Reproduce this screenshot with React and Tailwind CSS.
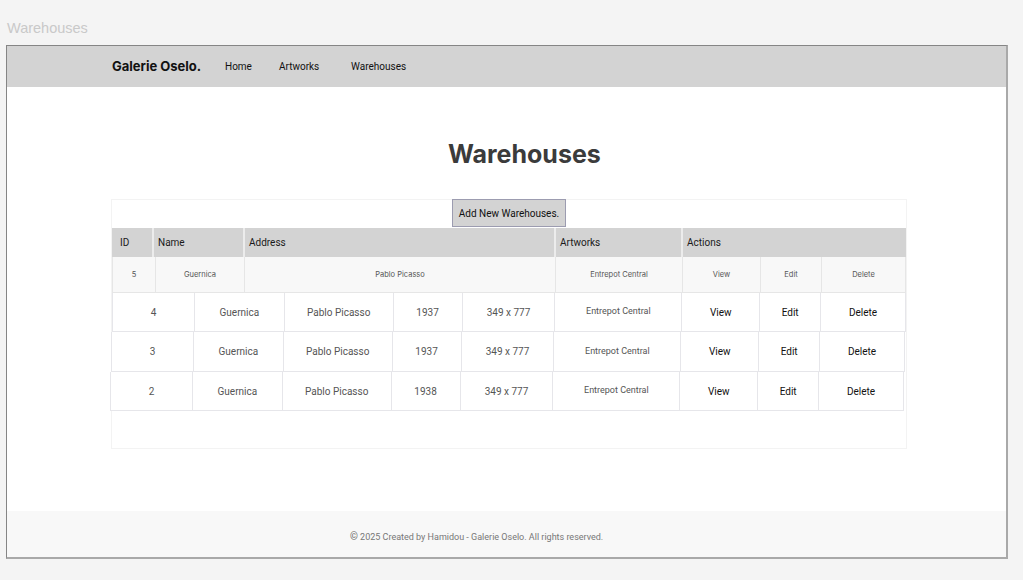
const NAV_LINKS = [
  { label: 'Home', w: 'w-[54px]' },
  { label: 'Artworks', w: 'w-[72px]' },
  { label: 'Warehouses', w: 'w-[80px]' },
]

const HEAD = [
  { label: 'ID', w: 'w-[40px]' },
  { label: 'Name', w: 'w-[91px]' },
  { label: 'Address', w: 'w-[311px]' },
  { label: 'Artworks', w: 'w-[127px]' },
  { label: 'Actions', w: 'flex-1' },
]

const FIRST_ROW = [
  { text: '5', w: 'w-[42px]' },
  { text: 'Guernica', w: 'w-[89px]' },
  { text: 'Pablo Picasso', w: 'w-[311px]' },
  { text: 'Entrepot Central', w: 'w-[127px]' },
  { text: 'View', w: 'w-[78px]' },
  { text: 'Edit', w: 'w-[61px]' },
  { text: 'Delete', w: 'flex-1' },
]

// rows are a little off from each other, like in the mockup
const ROWS = [
  { id: 4, year: '1937', shift: 'ml-0', h: 'h-[39px]' },
  { id: 3, year: '1937', shift: '-ml-px', h: 'h-[40px]' },
  { id: 2, year: '1938', shift: '-ml-[2px]', h: 'h-[39px]' },
]

const CELL_W = ['w-[81px]', 'w-[90px]', 'w-[109px]', 'w-[69px]', 'w-[93px]', 'w-[127px]', 'w-[78px]', 'w-[61px]', 'w-[85px]']

export default function App() {
  return (
    <div className="h-[580px] bg-[#f4f4f4] font-['Roboto',sans-serif] overflow-hidden">
      {/* page label */}
      <div className="h-[45px] pl-[7px] pt-[19px] text-[14.5px] leading-[18px] text-[#c9c9c9] font-['Liberation_Sans',sans-serif]">
        Warehouses
      </div>

      {/* frame */}
      <div className="ml-[6px] w-[1002px] h-[514px] flex flex-col bg-white border-t border-l border-[#858585] border-r-2 border-b-2 border-r-[#a9a9a9] border-b-[#a9a9a9]">
        {/* navbar */}
        <nav className="h-[41px] bg-[#d3d3d3] flex items-center pl-[105px]">
          <span className="w-[113px] font-['Inter',sans-serif] font-bold text-[13px] text-[#111]">
            Galerie Oselo.
          </span>
          {NAV_LINKS.map(link => (
            <span key={link.label} className={`${link.w} text-[10px] text-[#111]`}>{link.label}</span>
          ))}
        </nav>

        {/* main */}
        <main className="flex-1 pt-[50px]">
          <h1 className="h-[32px] pl-[441px] text-[25px] leading-[34px] font-bold font-['Inter',sans-serif] text-[#3b3b3b]">
            Warehouses
          </h1>

          <div className="mt-[30px] ml-[104px] w-[796px] h-[250px] border border-[#f3f3f3]">
            <div className="h-[28px] -mt-px mb-px flex justify-center">
              <button className="w-[114px] h-[28px] bg-[#d3d3d3] border border-[#9c9cb0] text-[10px] text-[#111]">
                Add New Warehouses.
              </button>
            </div>

            {/* header */}
            <div className="h-[29px] w-[794px] bg-[#d3d3d3] flex">
              {HEAD.map((h, i) => (
                <div
                  key={h.label}
                  className={`${h.w} flex items-center text-[10px] text-[#1a1a1a] ${i > 0 ? 'pl-[4px] border-l-2 border-[#ececec]' : 'pl-[8px]'}`}
                >
                  {h.label}
                </div>
              ))}
            </div>

            {/* first row */}
            <div className="h-[36px] w-[794px] flex bg-[#f8f8f8] border border-t-0 border-[#e6e6e6]">
              {FIRST_ROW.map((c, i) => (
                <div
                  key={i}
                  className={`${c.w} flex items-center justify-center font-['Inter',sans-serif] text-[7.5px] text-[#555] ${i > 0 ? 'border-l border-[#e6e6e6]' : ''}`}
                >
                  {c.text}
                </div>
              ))}
            </div>

            {/* data rows */}
            {ROWS.map(r => {
              const cells = [r.id, 'Guernica', 'Pablo Picasso', r.year, '349 x 777', 'Entrepot Central', 'View', 'Edit', 'Delete']
              return (
                <div key={r.id} className={`${r.h} ${r.shift} w-[794px] flex bg-white border border-t-0 border-[#e6e6ea]`}>
                  {cells.map((c, i) => (
                    <div
                      key={i}
                      className={`${CELL_W[i]} flex items-center justify-center ${i > 0 ? 'border-l border-[#e6e6ea]' : ''} ${
                        i === 5 ? 'text-[9px] text-[#555]' : i > 5 ? 'text-[10px] text-[#111]' : 'text-[10px] text-[#555]'
                      }`}
                    >
                      {c}
                    </div>
                  ))}
                </div>
              )
            })}
          </div>
        </main>

        {/* footer */}
        <footer className="h-[46px] bg-[#f8f8f8] pl-[343px] pt-[20px] text-[9px] leading-[12px] text-[#777]">
          <span className="text-[10px] text-[#666]">©</span> 2025 Created by Hamidou - Galerie Oselo. All rights reserved.
        </footer>
      </div>
    </div>
  )
}
